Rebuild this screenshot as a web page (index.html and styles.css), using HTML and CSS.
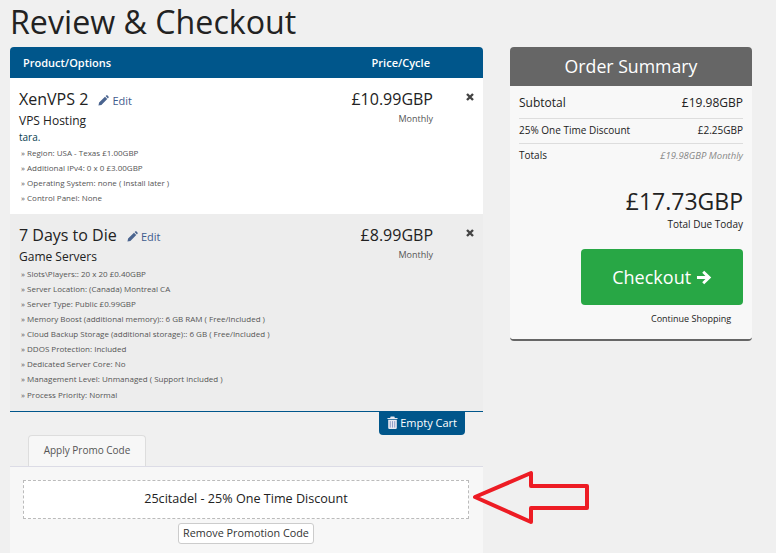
FILE: index.html
```html
<!DOCTYPE html>
<html lang="en">
<head>
    <meta charset="UTF-8">
    <meta name="viewport" content="width=device-width, initial-scale=1.0">
    <title>Review &amp; Checkout</title>
    <link rel="stylesheet" href="styles.css">
</head>
<body>
    <h1 class="page-title">Review &amp; Checkout</h1>

    <div class="layout">
        <div class="cart">
            <div class="cart-head">
                <span>Product/Options</span>
                <span class="cart-head-price">Price/Cycle</span>
            </div>

            <div class="item item-white">
                <div class="item-info">
                    <div class="item-title">XenVPS 2 <a class="edit"><svg class="edit-icon" viewBox="0 0 12 12"><path d="M0.5 11.5 L1.2 8.3 L7.6 1.9 L10.1 4.4 L3.7 10.8 Z M8.3 1.2 L9.2 0.4 Q9.7 0 10.2 0.4 L11.6 1.8 Q12 2.3 11.6 2.8 L10.8 3.7 Z"/></svg>Edit</a></div>
                    <div class="item-group">VPS Hosting</div>
                    <div class="item-domain">tara.</div>
                    <div class="opt">» Region: USA - Texas £1.00GBP</div>
                    <div class="opt">» Additional IPv4: 0 x 0 £3.00GBP</div>
                    <div class="opt">» Operating System: none ( Install later )</div>
                    <div class="opt">» Control Panel: None</div>
                </div>
                <div class="item-price">
                    <div class="price">£10.99GBP</div>
                    <div class="cycle">Monthly</div>
                </div>
                <div class="item-remove"><svg class="remove-icon" viewBox="0 0 8 8"><path d="M1 1 L7 7 M7 1 L1 7"/></svg></div>
            </div>

            <div class="item item-grey">
                <div class="item-info">
                    <div class="item-title">7 Days to Die <a class="edit"><svg class="edit-icon" viewBox="0 0 12 12"><path d="M0.5 11.5 L1.2 8.3 L7.6 1.9 L10.1 4.4 L3.7 10.8 Z M8.3 1.2 L9.2 0.4 Q9.7 0 10.2 0.4 L11.6 1.8 Q12 2.3 11.6 2.8 L10.8 3.7 Z"/></svg>Edit</a></div>
                    <div class="item-group">Game Servers</div>
                    <div class="opt">» Slots\Players:: 20 x 20 £0.40GBP</div>
                    <div class="opt">» Server Location: (Canada) Montreal CA</div>
                    <div class="opt">» Server Type: Public £0.99GBP</div>
                    <div class="opt">» Memory Boost (additional memory):: 6 GB RAM ( Free/Included )</div>
                    <div class="opt">» Cloud Backup Storage (additional storage):: 6 GB ( Free/Included )</div>
                    <div class="opt">» DDOS Protection: Included</div>
                    <div class="opt">» Dedicated Server Core: No</div>
                    <div class="opt">» Management Level: Unmanaged ( Support included )</div>
                    <div class="opt opt-last">» Process Priority: Normal</div>
                </div>
                <div class="item-price">
                    <div class="price">£8.99GBP</div>
                    <div class="cycle">Monthly</div>
                </div>
                <div class="item-remove"><svg class="remove-icon" viewBox="0 0 8 8"><path d="M1 1 L7 7 M7 1 L1 7"/></svg></div>
            </div>

            <div class="cart-actions">
                <button class="empty-btn"><svg class="trash-icon" viewBox="0 0 12 14"><path d="M4 0.5 H8 L8.6 2 H11.5 V3.2 H0.5 V2 H3.4 Z M1.3 4 H10.7 V12.6 Q10.7 14 9.4 14 H2.6 Q1.3 14 1.3 12.6 Z"/><path class="trash-lines" d="M3.6 5.5 V12.5 M6 5.5 V12.5 M8.4 5.5 V12.5"/></svg>Empty Cart</button>
            </div>

            <div class="tabs">
                <div class="tab">Apply Promo Code</div>
            </div>
            <div class="tab-content">
                <div class="promo-box">25citadel - 25% One Time Discount</div>
                <button class="remove-btn">Remove Promotion Code</button>
            </div>
        </div>

        <div class="summary">
            <div class="summary-head">Order Summary</div>
            <div class="summary-body">
                <div class="sum-row sum-sub"><span>Subtotal</span><span>£19.98GBP</span></div>
                <div class="sum-row sum-small"><span>25% One Time Discount</span><span>£2.25GBP</span></div>
                <div class="sum-row sum-totals"><span>Totals</span><em>£19.98GBP Monthly</em></div>
                <div class="total-due">£17.73GBP</div>
                <div class="total-label">Total Due Today</div>
                <div class="checkout-wrap">
                    <button class="checkout-btn">Checkout <svg class="arrow-icon" viewBox="0 0 17 16"><path d="M1 6.3 H10 L6.6 2.9 L8.7 0.8 L16.2 8 L8.7 15.2 L6.6 13.1 L10 9.7 H1 Z"/></svg></button>
                </div>
                <div class="continue">Continue Shopping</div>
            </div>
        </div>
    </div>

    <svg class="red-arrow" viewBox="0 0 122 58"><path d="M5 29 L61 5 V18 H117 V40 H61 V54 Z"/></svg>
</body>
</html>
```

FILE: styles.css
```css
html, body {
    height: 553px;
    overflow: hidden;
}
body {
    font-family: "Open Sans", sans-serif;
    margin: 0;
    padding: 0 10px;
    background-color: #f0f0f0;
    color: #222;
    position: relative;
}
.page-title {
    font-size: 32.2px;
    font-weight: 400;
    line-height: 44px;
    margin: 0 0 3px 0;
    color: #222;
}
.layout {
    display: flex;
    align-items: flex-start;
    gap: 27px;
}
.cart {
    width: 473px;
}
.cart-head {
    display: flex;
    justify-content: space-between;
    height: 31px;
    line-height: 31px;
    padding: 0 53px 0 13px;
    background-color: #00568b;
    color: white;
    font-size: 11px;
    font-weight: 600;
    border-radius: 4px 4px 0 0;
}
.item {
    display: flex;
    padding: 9px 9px 0 9px;
}
.item-white {
    background-color: white;
    height: 127px;
}
.item-grey {
    background-color: #ededed;
    height: 188px;
    border-bottom: 1px solid #00568b;
}
.item-info {
    flex: 1;
}
.item-title {
    font-size: 16px;
    line-height: 24px;
}
.edit {
    color: #3f5c8e;
    font-size: 11px;
    margin-left: 6px;
}
.edit-icon {
    width: 11px;
    height: 11px;
    fill: #4a648f;
    margin-right: 3px;
    vertical-align: -1px;
}
.item-group {
    font-size: 12px;
    line-height: 18px;
    margin-top: -1px;
}
.item-domain {
    font-size: 10px;
    line-height: 15px;
    color: #05404f;
}
.opt {
    font-size: 8px;
    line-height: 15px;
    padding-left: 2px;
    color: #555;
}
.opt-last {
    margin-top: 1px;
}
.item-price {
    width: 120px;
    text-align: right;
    margin-right: 19px;
}
.price {
    font-size: 16px;
    line-height: 24px;
}
.cycle {
    font-size: 9px;
    line-height: 16px;
    color: #555;
}
.item-remove {
    width: 22px;
    display: flex;
    justify-content: flex-end;
    padding-top: 6px;
}
.remove-icon {
    width: 8px;
    height: 8px;
    fill: none;
    stroke: #444;
    stroke-width: 2.4;
}
.cart-actions {
    display: flex;
    justify-content: flex-end;
    padding-right: 18px;
}
.empty-btn {
    display: flex;
    align-items: center;
    height: 23px;
    padding: 0 8px 2px 8px;
    background-color: #00568b;
    color: white;
    font-family: inherit;
    font-size: 11px;
    border: none;
    border-radius: 0 0 4px 4px;
}
.trash-icon {
    width: 11px;
    height: 13px;
    fill: #e8e8f0;
    margin-right: 2px;
}
.trash-lines {
    stroke: #7f8fc0;
    stroke-width: 0.9;
}
.tabs {
    padding-left: 18px;
}
.tab {
    width: 118px;
    height: 31px;
    line-height: 29px;
    box-sizing: border-box;
    text-align: center;
    font-size: 10px;
    color: #555;
    background-color: #f7f7f7;
    border: 1px solid #ddd;
    border-bottom: none;
    border-radius: 4px 4px 0 0;
}
.tab-content {
    background-color: #f7f7f7;
    border-top: 1px solid #dcdce6;
    padding: 13px 14px 9px 13px;
    height: 70px;
    text-align: center;
}
.promo-box {
    height: 39px;
    line-height: 36px;
    box-sizing: border-box;
    background-color: white;
    border: 1px dashed #bbb;
    font-size: 12.6px;
    color: #222;
}
.remove-btn {
    height: 21px;
    width: 136px;
    margin-top: 4px;
    padding: 0 0 2px 0;
    background-color: white;
    border: 1px solid #ccc;
    border-radius: 3px;
    font-family: inherit;
    font-size: 10.8px;
    color: #333;
}
.summary {
    width: 242px;
    border-radius: 4px;
    background-color: #f8f8f8;
    border-bottom: 2px solid #666;
}
.summary-head {
    height: 39px;
    line-height: 38px;
    text-align: center;
    background-color: #666;
    color: white;
    font-size: 17.7px;
    border-radius: 4px 4px 0 0;
}
.summary-body {
    padding: 0 9px 13px 9px;
}
.sum-row {
    display: flex;
    justify-content: space-between;
    align-items: center;
}
.sum-sub {
    height: 32px;
    font-size: 12px;
    border-bottom: 1px solid #ddd;
}
.sum-small {
    height: 22px;
    padding-bottom: 2px;
    font-size: 10px;
    border-bottom: 1px solid #ddd;
}
.sum-totals {
    height: 22px;
    padding-bottom: 2px;
    font-size: 10px;
}
.sum-totals em {
    font-size: 9.5px;
    color: #888;
}
.total-due {
    text-align: right;
    font-size: 23px;
    line-height: 32px;
    margin-top: 17px;
}
.total-label {
    text-align: right;
    font-size: 10px;
    line-height: 14px;
}
.checkout-wrap {
    display: flex;
    justify-content: flex-end;
    margin-top: 18px;
}
.checkout-btn {
    width: 162px;
    height: 56px;
    background-color: #28a745;
    color: white;
    font-family: inherit;
    font-size: 18px;
    border: none;
    border-radius: 4px;
    padding: 0;
}
.arrow-icon {
    width: 16px;
    height: 15px;
    fill: white;
    vertical-align: -1px;
}
.continue {
    font-size: 9px;
    line-height: 14px;
    margin-top: 7px;
    padding-left: 132px;
    color: #222;
}
.red-arrow {
    position: absolute;
    left: 470px;
    top: 468px;
    width: 122px;
    height: 58px;
    fill: none;
    stroke: #ed1c24;
    stroke-width: 4;
    stroke-linejoin: round;
}
```
